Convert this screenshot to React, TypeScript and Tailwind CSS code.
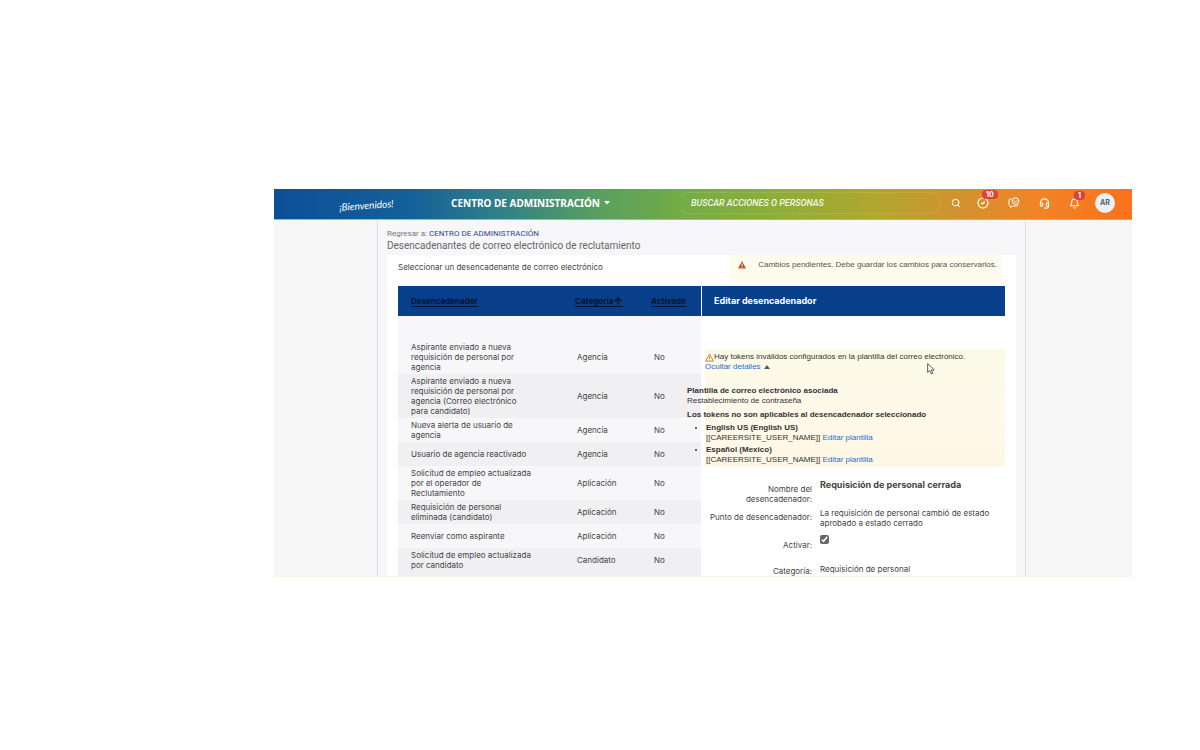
import { ArrowUp, Bell, CircleCheck, Headset, Search } from "lucide-react";

const triggers = [
  { name: "Aspirante enviado a nueva requisición de personal por agencia", category: "Agencia" },
  { name: "Aspirante enviado a nueva requisición de personal por agencia (Correo electrónico para candidato)", category: "Agencia" },
  { name: "Nueva alerta de usuario de agencia", category: "Agencia" },
  { name: "Usuario de agencia reactivado", category: "Agencia" },
  { name: "Solicitud de empleo actualizada por el operador de Reclutamiento", category: "Aplicación" },
  { name: "Requisición de personal eliminada (candidato)", category: "Aplicación" },
  { name: "Reenviar como aspirante", category: "Aplicación" },
  { name: "Solicitud de empleo actualizada por candidato", category: "Candidato" },
];

const tokens = ["English US (English US)", "Español (Mexico)"];

function ChatIcon() {
  return (
    <svg viewBox="0 0 24 24" className="size-3" fill="none" stroke="currentColor" strokeWidth="2" strokeLinecap="round" strokeLinejoin="round" aria-hidden="true">
      <path d="M6 4H4a2 2 0 0 0-2 2v9q0 3 3 3v3l4-3h8q3 0 3-2" />
      <circle cx="15" cy="8" r="6.5" />
      <path d="M12 7.500l3 2.500 3-2.500" />
    </svg>
  );
}

function Badge({ children }: { children: string }) {
  return (
    <span className="absolute -top-[7px] left-[5px] rounded bg-[#d8433c] px-1 text-[7px] leading-[9px] font-bold text-white">
      {children}
    </span>
  );
}

function Header() {
  return (
    <header className="flex h-[31px] items-center border-b border-[#b4b0a0] bg-[linear-gradient(90deg,#0c4f98_0%,#14609a_16%,#338285_27%,#5a9f60_38%,#74ad42_48%,#8fae38_59%,#b0a62e_70%,#d2922f_80%,#f18427_89%,#fb701d_100%)] pr-[17px] pb-[2px] pl-[65px] text-white">
      <a href="#inicio" className="w-[112px] -rotate-4 font-[Lato,cursive] text-[10px] leading-4 italic">
        ¡Bienvenidos!
      </a>
      <button className="flex items-center gap-1 font-['Noto_Sans',sans-serif] text-[10px] font-bold whitespace-nowrap">
        CENTRO DE ADMINISTRACIÓN
        <svg viewBox="0 0 6 4" className="w-[6px]" fill="currentColor" aria-hidden="true">
          <path d="M0 0h6L3 3.500z" />
        </svg>
      </button>
      <input
        type="search"
        aria-label="Buscar acciones o personas"
        placeholder="BUSCAR ACCIONES O PERSONAS"
        className="mr-[10px] ml-[68px] h-[22px] min-w-0 flex-1 rounded-full border border-white/10 border-l-transparent px-3 font-[Roboto,sans-serif] text-[9px] font-medium italic outline-none placeholder:text-white/90"
      />
      <div className="flex items-center gap-[19px]">
        <button aria-label="Buscar" className="-mr-[3px]"><Search className="size-[10px]" strokeWidth={2.4} /></button>
        <button aria-label="Tareas" className="relative"><CircleCheck className="size-3" strokeWidth={2.2} /><Badge>10</Badge></button>
        <button aria-label="Conversaciones"><ChatIcon /></button>
        <button aria-label="Soporte"><Headset className="size-[11px]" strokeWidth={2.4} /></button>
        <button aria-label="Notificaciones" className="relative"><Bell className="size-[11px]" strokeWidth={2.2} /><Badge>1</Badge></button>
        <button className="-ml-1 size-5 rounded-full bg-[#edf1f3] text-[7px] font-bold text-[#4d6275]">AR</button>
      </div>
    </header>
  );
}

function TriggerTable() {
  return (
    <div className="w-[303px] shrink-0 bg-[#f0eff1]">
      <table className="w-full table-fixed border-collapse bg-[#f7f6f9] text-left text-[8px] leading-[10px]">
        <thead className="bg-[#083f8b] text-[#06132b]">
          <tr className="h-[30px]">
            <th className="pl-[13px] font-bold"><a href="#nombre" className="border-b border-[#06132b]">Desencadenador</a></th>
            <th className="w-[76px] font-bold">
              <a href="#categoria" className="inline-flex items-center border-b border-[#06132b]">
                Categoría
                <ArrowUp className="size-[10px]" strokeWidth={3.5} aria-hidden="true" />
              </a>
            </th>
            <th className="w-[50px] font-bold"><a href="#activado" className="border-b border-[#06132b]">Activado</a></th>
          </tr>
        </thead>
        <tbody>
          <tr className="h-6"><td colSpan={3} /></tr>
          {triggers.map((t) => (
            <tr key={t.name} className="h-6 odd:bg-[#f0eff1]">
              <td className="py-[2px] pr-[41px] pl-[13px]">{t.name}</td>
              <td className="pl-[2px]">{t.category}</td>
              <td className="pl-[3px]">No</td>
            </tr>
          ))}
        </tbody>
      </table>
    </div>
  );
}

function TokenAlert() {
  return (
    <div className="relative ml-[3px] bg-[linear-gradient(180deg,#fbfae7,#fef9e9_50%,#fef7e6)] pt-[3px] pb-[2px] font-['Liberation_Sans',sans-serif] text-[8px] leading-[10px] text-[#333]">
      <p className="flex items-center whitespace-nowrap">
        <svg viewBox="0 0 10 10" className="size-[9px]" fill="none" stroke="#cf7a35" aria-hidden="true">
          <path d="M5 1 9.300 9H.7zM5 3.500v3M5 7.300v1" />
        </svg>
        Hay tokens inválidos configurados en la plantilla del correo electrónico.
      </p>
      <button className="flex items-center gap-[3px] text-[#1b6fd0]">
        Ocultar detalles
        <svg viewBox="0 0 6 4" className="w-[6px]" fill="#555" aria-hidden="true"><path d="M0 4h6L3 0z" /></svg>
      </button>
      <div className="-ml-[18px] pt-[14px]">
        <p className="font-bold">Plantilla de correo electrónico asociada</p>
        <p>Restablecimiento de contraseña</p>
        <p className="mt-1 font-bold">Los tokens no son aplicables al desencadenador seleccionado</p>
        <ul className="mt-[3px] flex list-disc flex-col gap-[2px] pl-[19px]">
          {tokens.map((t) => (
            <li key={t}>
              <p className="font-bold">{t}</p>
              <p>[[CAREERSITE_USER_NAME]] <a href="#editar" className="text-[#1b6fd0]">Editar plantilla</a></p>
            </li>
          ))}
        </ul>
      </div>
      <svg viewBox="0 0 12 18" className="absolute top-[14px] left-[222px] w-2" fill="#fff" stroke="#444" strokeWidth="1.300" aria-hidden="true">
        <path d="M1 1v13l3-3 2.500 5.500 2.200-1L6.500 10.500H11z" />
      </svg>
    </div>
  );
}

function TriggerForm() {
  return (
    <form className="grid grid-cols-[110px_1fr] gap-x-2 pt-[13px] text-[8px] leading-[10px]">
      <div className="pt-1 pl-4 text-right">Nombre del desencadenador:</div>
      <div className="text-[9px] font-bold">Requisición de personal cerrada</div>
      <div className="pt-2 text-right whitespace-nowrap">Punto de desencadenador:</div>
      <div className="pt-1">La requisición de personal cambió de estado aprobado a estado cerrado</div>
      <label htmlFor="activar" className="pt-3 text-right">Activar:</label>
      <div className="pt-[7px]">
        <input id="activar" type="checkbox" defaultChecked className="block size-[9px] accent-[#666]" />
      </div>
      <div className="pt-4 text-right">Categoría:</div>
      <div className="pt-[14px]">Requisición de personal</div>
    </form>
  );
}

export default function App() {
  return (
    <div className="bg-white pt-[189px] pr-[68px] pb-10 pl-[274px] font-[Inter,sans-serif] text-[#444]">
      <Header />
      <div className="border-b border-[#fbf3e3] bg-[#f6f6f6] pr-[106px] pl-[103px]">
        <main className="border-x border-[#dedde0] bg-[#f7f6f9] pt-[9px] pr-[9px] pl-[9px]">
          <p className="font-[Roboto,sans-serif] text-[8px] leading-[10px] text-[#777]">
            Regresar a: <a href="#centro" className="text-[#2a4a91]">CENTRO DE ADMINISTRACIÓN</a>
          </p>
          <h1 className="font-[Roboto,sans-serif] text-[10px] leading-[14px] text-[#666]">Desencadenantes de correo electrónico de reclutamiento</h1>
          <section className="mt-[2px] bg-white pr-[11px] pl-[11px]">
            <div className="flex h-[31px] items-start justify-between">
              <h2 className="pt-[7px] text-[8px] leading-[10px]">Seleccionar un desencadenante de correo electrónico</h2>
              <p role="alert" className="mr-1 flex h-[26px] items-start gap-3 bg-[#fdfcec] pt-1 pr-1 pl-2 font-['Liberation_Sans',sans-serif] text-[8px] leading-[11px] text-[#555]">
                <svg viewBox="0 0 10 10" className="mt-[2px] size-2" aria-hidden="true">
                  <path d="M5 0 10 9.500H0z" fill="#b9572c" />
                  <path d="M5 3v3M5 7v1.200" stroke="#fff" strokeWidth="1.200" />
                </svg>
                Cambios pendientes. Debe guardar los cambios para conservarlos.
              </p>
            </div>
            <div className="flex">
              <TriggerTable />
              <section className="ml-px min-w-0 flex-1">
                <h2 className="mb-[33px] bg-[#083f8b] pl-[12px] text-[9px] leading-[30px] font-bold text-white">Editar desencadenador</h2>
                <TokenAlert />
                <TriggerForm />
              </section>
            </div>
          </section>
        </main>
      </div>
    </div>
  );
}
